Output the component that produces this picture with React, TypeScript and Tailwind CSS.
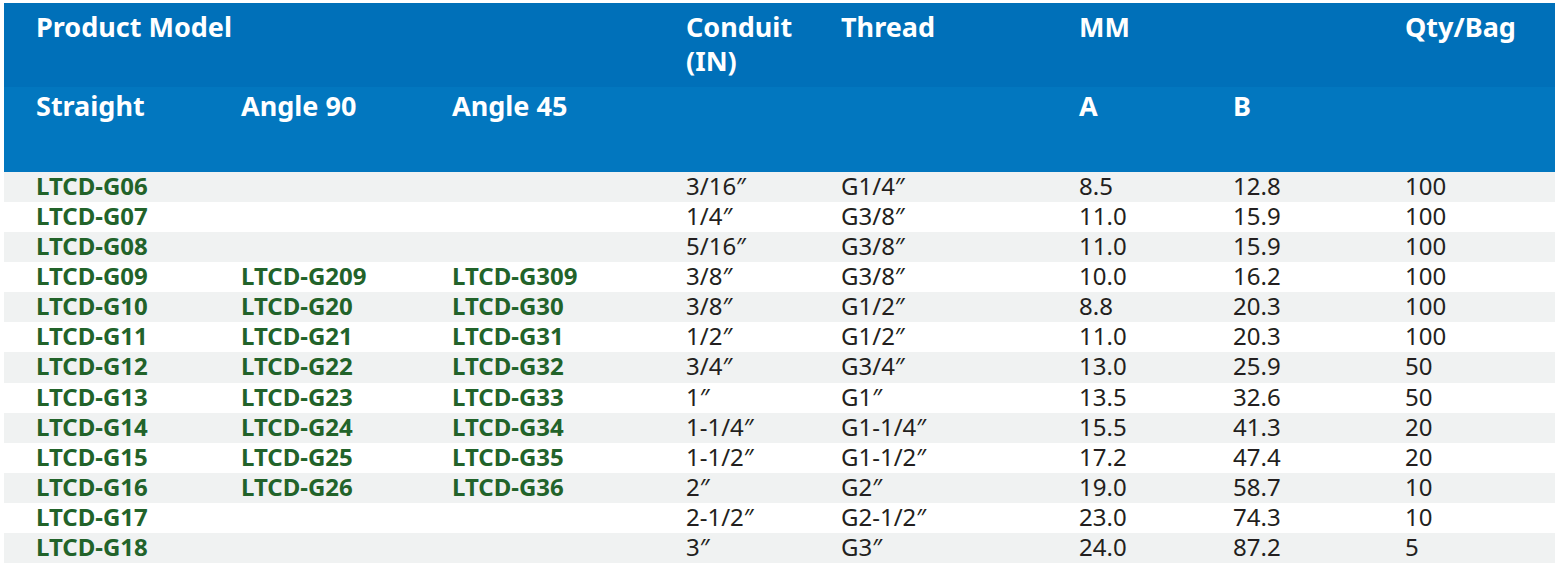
import React from "react";

const rows: string[][] = [
  ["LTCD-G06", "", "", "3/16″", "G1/4″", "8.5", "12.8", "100"],
  ["LTCD-G07", "", "", "1/4″", "G3/8″", "11.0", "15.9", "100"],
  ["LTCD-G08", "", "", "5/16″", "G3/8″", "11.0", "15.9", "100"],
  ["LTCD-G09", "LTCD-G209", "LTCD-G309", "3/8″", "G3/8″", "10.0", "16.2", "100"],
  ["LTCD-G10", "LTCD-G20", "LTCD-G30", "3/8″", "G1/2″", "8.8", "20.3", "100"],
  ["LTCD-G11", "LTCD-G21", "LTCD-G31", "1/2″", "G1/2″", "11.0", "20.3", "100"],
  ["LTCD-G12", "LTCD-G22", "LTCD-G32", "3/4″", "G3/4″", "13.0", "25.9", "50"],
  ["LTCD-G13", "LTCD-G23", "LTCD-G33", "1″", "G1″", "13.5", "32.6", "50"],
  ["LTCD-G14", "LTCD-G24", "LTCD-G34", "1-1/4″", "G1-1/4″", "15.5", "41.3", "20"],
  ["LTCD-G15", "LTCD-G25", "LTCD-G35", "1-1/2″", "G1-1/2″", "17.2", "47.4", "20"],
  ["LTCD-G16", "LTCD-G26", "LTCD-G36", "2″", "G2″", "19.0", "58.7", "10"],
  ["LTCD-G17", "", "", "2-1/2″", "G2-1/2″", "23.0", "74.3", "10"],
  ["LTCD-G18", "", "", "3″", "G3″", "24.0", "87.2", "5"],
];

const cols = "grid grid-cols-[205px_211px_234px_155px_238px_154px_172px_182px]";

export default function App() {
  return (
    <div className="w-[1561px] h-[571px] bg-white pt-[3px] pl-[4px] font-['Noto_Sans',sans-serif]">
      <div className="w-[1551px]">
        <div className={`${cols} h-[84px] bg-[#0070b9] text-white font-bold text-[27px] leading-[34px] pt-[7px]`}>
          <div className="col-span-3 pl-[32px]">Product Model</div>
          <div className="pl-[32px]">Conduit<br />(IN)</div>
          <div className="pl-[32px]">Thread</div>
          <div className="pl-[32px]">MM</div>
          <div className="pl-[32px]"></div>
          <div className="pl-[32px]">Qty/Bag</div>
        </div>
        <div className={`${cols} h-[85px] bg-[#0277bf] text-white font-bold text-[27px] leading-[34px] pt-[2px]`}>
          <div className="pl-[32px]">Straight</div>
          <div className="pl-[32px]">Angle 90</div>
          <div className="pl-[32px]">Angle 45</div>
          <div className="pl-[32px]"></div>
          <div className="pl-[32px]"></div>
          <div className="pl-[32px]">A</div>
          <div className="pl-[32px]">B</div>
          <div className="pl-[32px]"></div>
        </div>
        {rows.map((r, i) => (
          <div
            key={i}
            className={`${cols} h-[30.08px] items-start text-[24px] leading-[27px] ${i % 2 === 0 ? "bg-[#f0f2f2]" : "bg-white"}`}
          >
            {r.map((c, j) => (
              <div
                key={j}
                className={`pl-[32px] ${j < 3 ? "font-bold text-[#22632a]" : "text-[#231f20]"}`}
              >
                {c}
              </div>
            ))}
          </div>
        ))}
      </div>
    </div>
  );
}
